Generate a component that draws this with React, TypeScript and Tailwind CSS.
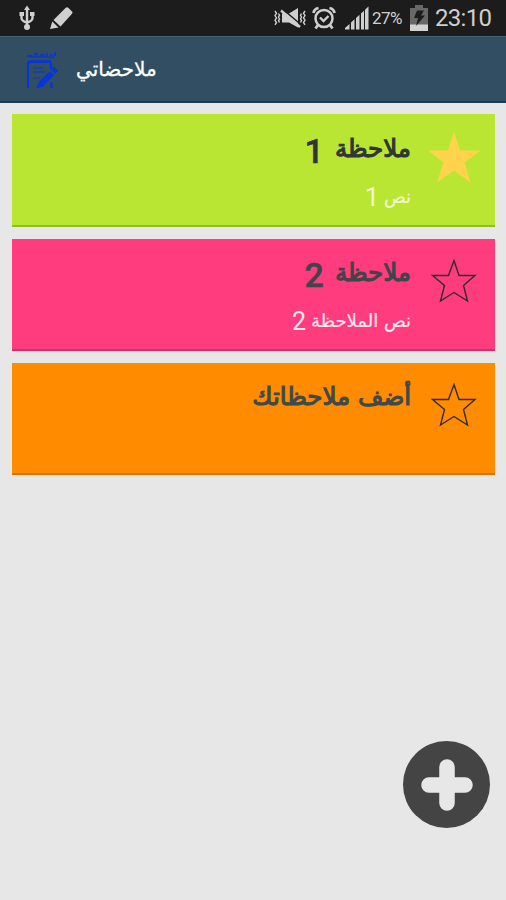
const arabic = "font-['DejaVu_Sans',sans-serif]";

function StatusBar() {
  return (
    <div className="flex h-9 items-center bg-[#1c1c1c] pl-[18px] pr-[14px]">
      <svg width="18" height="26" viewBox="0 0 18 26" fill="none" stroke="#cfcfcf" strokeWidth="2.4">
        <path d="M9 3V22M3.500 9V13Q3.500 16 9 17.500M14.500 9V13Q14.500 16 9 17.500" />
        <path d="M9 0.500L12 5H6Z" fill="#cfcfcf" stroke="none" />
        <circle cx="9" cy="22" r="3" fill="#cfcfcf" stroke="none" />
        <path d="M1.500 7h4.500v4H1.500zM12 7h4.500v4h-4.500z" fill="#cfcfcf" stroke="none" />
      </svg>
      <svg className="ml-[13px]" width="24" height="24" viewBox="0 0 24 24" fill="#cfcfcf">
        <path d="M4.500 14L16.500 2Q18 0.500 19.500 2L23 5.500Q24 6.500 23 7.800L11.500 20.500Z" />
        <path d="M3.300 15.500L9.500 21.500L1 23Z" />
      </svg>
      <svg className="ml-auto" width="34" height="24" viewBox="0 0 34 24" fill="none" stroke="#cfcfcf">
        <path d="M2 5l1.500 2.300-1.500 2.300 1.500 2.300-1.500 2.300 1.500 2.300-1.500 2.300M5.500 7.500l1 1.800-1 1.800 1 1.800-1 1.800 1 1.800M32 5l-1.500 2.300 1.500 2.300-1.500 2.300 1.500 2.300-1.500 2.300 1.500 2.300M28.500 7.500l-1 1.800 1 1.800-1 1.800 1 1.800-1 1.800" strokeWidth="1.400" />
        <path d="M9 7.500h7L25 2v19.500l-9-5H9z" fill="#cfcfcf" stroke="none" />
        <path d="M10 3.500L28.500 19" stroke="#1c1c1c" strokeWidth="1.600" />
        <path d="M8 4.500L27 21" strokeWidth="2.400" />
      </svg>
      <svg className="ml-[5px]" width="24" height="24" viewBox="0 0 24 24" fill="none" stroke="#cfcfcf">
        <circle cx="12" cy="12.500" r="8.500" strokeWidth="2.500" />
        <path d="M1.500 7Q2 3 6.500 2M22.500 7Q22 3 17.500 2" strokeWidth="2.800" />
        <path d="M6 19L3.500 22.500M18 19L20.500 22.500" strokeWidth="2.800" />
        <path d="M8 11.500L11.500 15L16.500 10" strokeWidth="2.400" />
      </svg>
      <svg className="ml-[9px]" width="24" height="24" viewBox="0 0 24 24" fill="#cfcfcf">
        <path d="M0 23.500V22L4.500 18V23.500zM6 23.500V16.500L9.500 13.300V23.500zM11 23.500V12L14.500 8.700V23.500zM16 23.500V7.500L19 4.700V23.500zM20 23.500V3.700L23.500 0.500V23.500z" />
      </svg>
      <span className="ml-[3px] w-[33px] font-['Roboto',sans-serif] text-[17px] leading-9 tracking-[-0.5px] whitespace-nowrap text-[#cfcfcf]">27%</span>
      <svg className="ml-[5px]" width="18" height="26" viewBox="0 0 18 26">
        <path d="M0 3h5V0h8v3h5v23H0z" fill="#686868" />
        <path d="M0 19.500h18V26H0z" fill="#d2d2d2" />
        <path d="M7 5.500h7l-3 5h4L6 21l2-8H4z" fill="#1c1c1c" />
      </svg>
      <span className="ml-[7px] w-[57px] font-['Roboto',sans-serif] text-[24px] leading-9 tracking-[-0.7px] whitespace-nowrap text-[#cfcfcf]">23:10</span>
    </div>
  );
}

function NotesLogo() {
  return (
    <svg width="36" height="40" viewBox="0 0 36 40" fill="none" stroke="#0735d6">
      <path d="M2 5.500Q4 4 7 5M9 4.500l2-2 2 2M15 4h5M22 2.500v2.500M25 4h3M30 1v4" strokeWidth="1.600" />
      <path d="M4 6H30" strokeWidth="1.500" opacity="0.8" />
      <path d="M3 37V13Q3 11 5 11H24Q26 11 26 13V18M26.500 31V37" strokeWidth="2.200" />
      <path d="M3 10.500H26" strokeWidth="2.500" />
      <path d="M8 17H18M8 21H20M8 27H15" strokeWidth="1.200" />
      <path d="M16 33L27 22" strokeWidth="6" />
      <path d="M28 20.500L31 17.500" strokeWidth="6" />
      <path d="M14 30.500L19 35.500L11 37.500Z" fill="#0735d6" stroke="none" />
    </svg>
  );
}

interface Note {
  title: string;
  digit?: string;
  body?: string;
  bodyDigit?: string;
  starred: boolean;
  colors: string;
  ink: string;
  muted: string;
}

const notes: Note[] = [
  { title: 'ملاحظة', digit: '1', body: 'نص', bodyDigit: '1', starred: true, colors: 'h-[113px] bg-[#b9e632] border-[#92bd22]', ink: 'text-[#303535]', muted: 'text-[#f4f8cf]' },
  { title: 'ملاحظة', digit: '2', body: 'نص الملاحظة', bodyDigit: '2', starred: false, colors: 'mt-3 h-[112px] bg-[#ff3c7d] border-[#d92f68]', ink: 'text-[#404549]', muted: 'text-[#ffeaf2]' },
  { title: 'أضف ملاحظاتك', starred: false, colors: 'mt-3 h-[112px] bg-[#ff8b00] border-[#de7400]', ink: 'text-[#40494a]', muted: 'text-white' },
];

function NoteCard({ note }: { note: Note }) {
  return (
    <article dir="rtl" className={`flex border-b-2 pr-[15px] ${note.colors}`}>
      <svg className="mt-[17px] shrink-0" width="52" height="52" viewBox="0 0 52 52">
        {note.starred ? (
          <path d="M26 0.500L32 19.500H52.500L36.500 31.500L42.500 51.500L26 39.500L9 51.500L15.500 31.500L0 19.500H20Z" fill="#ffd44c" />
        ) : (
          <path d="M26 4.500L31 19.500H47L35.500 29.500L39.500 45L26 36.500L12.500 45L16.500 29.500L4.500 19.500H20.500Z" fill="none" stroke="#302b30" strokeWidth="1.400" />
        )}
      </svg>
      <div className={`mr-[17px] ${note.starred ? 'pt-4' : 'pt-[15px]'}`}>
        <div className={`flex h-[38px] items-center gap-[11px] whitespace-nowrap ${note.ink}`}>
          <span className={`${arabic} text-[24.5px] [-webkit-text-stroke:1.1px_currentColor]`}>{note.title}</span>
          {note.digit && <span className="pt-[3px] font-['Roboto',sans-serif] text-[34px] leading-none font-medium [-webkit-text-stroke:0.5px_currentColor]">{note.digit}</span>}
        </div>
        {note.body && (
          <div className={`mt-[9px] flex h-[38px] items-center gap-[5px] whitespace-nowrap ${note.muted}`}>
            <span className={`${arabic} text-[18px] [-webkit-text-stroke:0.2px_currentColor]`}>{note.body}</span>
            <span className="pt-[3px] font-['Roboto',sans-serif] text-[25px] leading-none">{note.bodyDigit}</span>
          </div>
        )}
      </div>
    </article>
  );
}

export default function App() {
  return (
    <div className="relative flex h-[900px] w-[506px] flex-col overflow-hidden bg-[#e7e7e7]">
      <StatusBar />
      <header className="flex h-[67px] items-center border-t border-b-2 border-t-[#416276] border-b-[#173c59] bg-[#314e62] pl-[25px]">
        <div className="pt-1"><NotesLogo /></div>
        <h1 dir="rtl" className={`ml-[15px] pb-px text-[20px] text-white whitespace-nowrap [-webkit-text-stroke:0.3px_white] ${arabic}`}>ملاحضاتي</h1>
      </header>
      <main className="flex flex-col pt-[11px] pr-[11px] pl-3">
        {notes.map((note, i) => <NoteCard key={i} note={note} />)}
      </main>
      <button aria-label="إضافة" className="absolute top-[741px] left-[403px] flex size-[87px] items-center justify-center rounded-full bg-[#444]">
        <svg width="52" height="52" viewBox="0 0 52 52" stroke="#e7e7e7" strokeWidth="15.500" strokeLinecap="round">
          <path d="M26 8V44M8 26H44" />
        </svg>
      </button>
    </div>
  );
}
